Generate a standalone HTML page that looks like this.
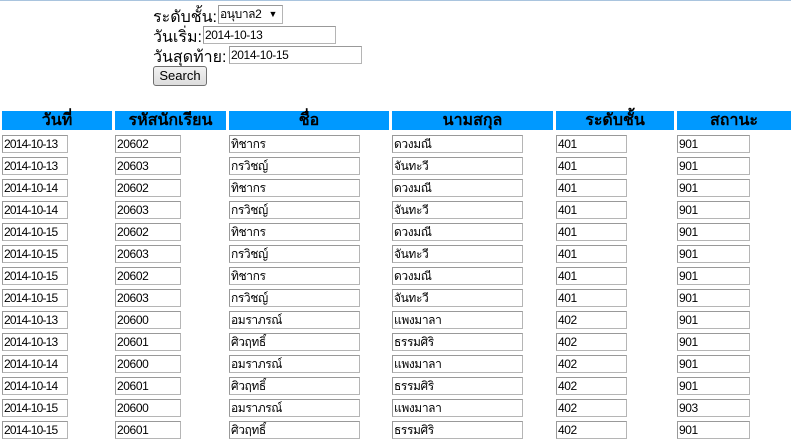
<!DOCTYPE html>
<html><head><meta charset="utf-8"><style>
body{margin:0;width:791px;height:445px;overflow:hidden;background:#fff;font-family:"Liberation Sans","Noto Sans CJK SC",sans-serif;position:relative}
.top{position:absolute;left:0;top:0;width:791px;height:1px;background:#a9c4de}
.lbl{position:absolute;font-size:16px;color:#000;font-family:"Liberation Sans","Noto Sans CJK SC",sans-serif}
.in{position:absolute;box-sizing:border-box;height:18px;border:1px solid #b5b5b5;border-top-color:#999;border-left-color:#999;background:#fff;font-size:12px;letter-spacing:-0.4px;line-height:16px;padding-left:1px;white-space:nowrap;overflow:hidden}
.h{position:absolute;top:111px;height:19px;background:#0099ff;font-weight:bold;font-size:16px;text-align:center;line-height:19px}
.btn{position:absolute;left:153px;top:66px;width:54px;height:20px;box-sizing:border-box;border:1px solid #707070;border-radius:3px;background:linear-gradient(#f2f2f2,#dcdcdc);font-size:13px;text-align:center;line-height:18px}
</style></head><body>
<div class="top"></div>
<div class="lbl" style="left:153px;top:5px">ระดับชั้น:</div>
<div class="in" style="left:218px;top:5px;width:65px;height:19px">อนุบาล2 <span style="position:absolute;right:5px;top:0;font-size:9px">▼</span></div>
<div class="lbl" style="left:153px;top:25px">วันเริ่ม:</div>
<div class="in" style="left:203px;top:26px;width:133px">2014-10-13</div>
<div class="lbl" style="left:153px;top:45px">วันสุดท้าย:</div>
<div class="in" style="left:229px;top:46px;width:133px">2014-10-15</div>
<div class="btn">Search</div>
<div class="h" style="left:2px;width:110px">วันที่</div>
<div class="h" style="left:115px;width:111px">รหัสนักเรียน</div>
<div class="h" style="left:229px;width:160px">ชื่อ</div>
<div class="h" style="left:392px;width:161px">นามสกุล</div>
<div class="h" style="left:556px;width:118px">ระดับชั้น</div>
<div class="h" style="left:677px;width:114px">สถานะ</div>
<div id="rows"></div>
<script>
var d=[["2014-10-13","20602","ทิชากร","ดวงมณี","401","901"],["2014-10-13","20603","กรวิชญ์","จันทะวี","401","901"],["2014-10-14","20602","ทิชากร","ดวงมณี","401","901"],["2014-10-14","20603","กรวิชญ์","จันทะวี","401","901"],["2014-10-15","20602","ทิชากร","ดวงมณี","401","901"],["2014-10-15","20603","กรวิชญ์","จันทะวี","401","901"],["2014-10-15","20602","ทิชากร","ดวงมณี","401","901"],["2014-10-15","20603","กรวิชญ์","จันทะวี","401","901"],["2014-10-13","20600","อมราภรณ์","แพงมาลา","402","901"],["2014-10-13","20601","ศิวฤทธิ์","ธรรมศิริ","402","901"],["2014-10-14","20600","อมราภรณ์","แพงมาลา","402","901"],["2014-10-14","20601","ศิวฤทธิ์","ธรรมศิริ","402","901"],["2014-10-15","20600","อมราภรณ์","แพงมาลา","402","903"],["2014-10-15","20601","ศิวฤทธิ์","ธรรมศิริ","402","901"]];
var L=[2,115,229,392,556,677],W=[66,66,131,131,71,73],h="";
for(var i=0;i<d.length;i++)for(var j=0;j<6;j++)h+='<div class="in" style="left:'+L[j]+'px;top:'+(135+i*22)+'px;width:'+W[j]+'px'+(j==0?';letter-spacing:-0.8px':'')+'">'+d[i][j]+'</div>';
document.getElementById("rows").innerHTML=h;
</script>
</body></html>
